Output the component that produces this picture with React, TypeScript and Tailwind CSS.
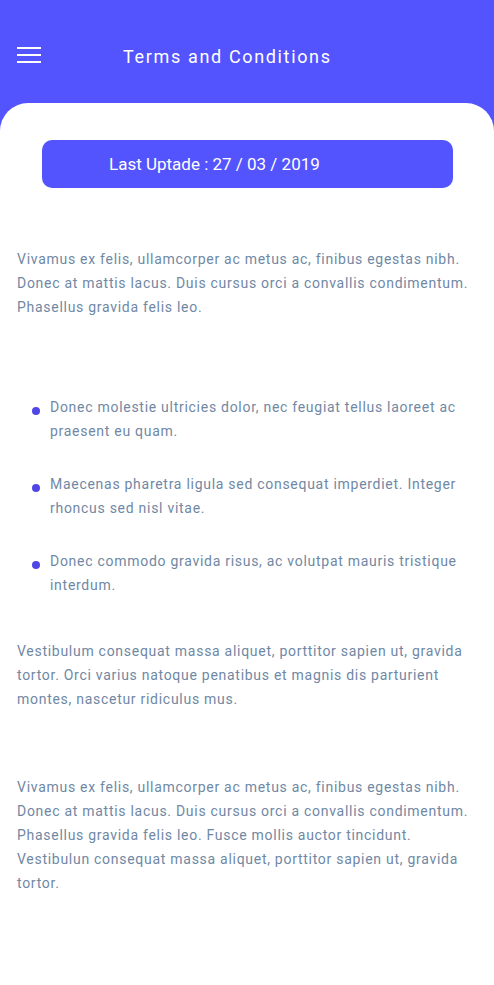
import React from "react";

const bullets = [
  "Donec molestie ultricies dolor, nec feugiat tellus laoreet ac praesent eu quam.",
  "Maecenas pharetra ligula sed consequat imperdiet. Integer rhoncus sed nisl vitae.",
  "Donec commodo gravida risus, ac volutpat mauris tristique interdum.",
];

export default function App() {
  return (
    <div className="min-h-[985px] bg-[#5454fe] font-['Roboto',sans-serif]">
      {/* header */}
      <header className="h-[103px] flex items-start pt-[46px] px-[17px]">
        <button className="w-6 h-[18px] flex flex-col justify-between py-px">
          <span className="block h-[2px] w-full bg-white" />
          <span className="block h-[2px] w-full bg-white" />
          <span className="block h-[2px] w-full bg-white" />
        </button>
        <h1 className="ml-[82px] -mt-[1px] text-[18px] leading-6 tracking-[1.65px] text-white">
          Terms and Conditions
        </h1>
      </header>

      {/* card */}
      <main className="bg-white rounded-t-[28px] min-h-[882px] pt-[37px] pb-16 text-[14px] leading-6 tracking-[0.72px] text-[#7088a4]">
        <div className="ml-[42px] mr-[41px] h-12 rounded-[10px] bg-[#5454fe] flex items-center pl-[67px] text-white text-[17px] tracking-normal">
          Last Uptade : 27 / 03 / 2019
        </div>

        <p className="mt-[59px] px-[17px]">
          Vivamus ex felis, ullamcorper ac metus ac, finibus egestas nibh. Donec at mattis lacus. Duis cursus orci a convallis condimentum. Phasellus gravida felis leo.
        </p>

        <ul className="mt-[76px] pl-8 pr-[17px] flex flex-col gap-[29px]">
          {bullets.map((b) => (
            <li key={b} className="flex items-start">
              <span className="mt-[12px] mr-[10px] w-2 h-2 shrink-0 rounded-full bg-[#4f46e5]" />
              <span>{b}</span>
            </li>
          ))}
        </ul>

        <p className="mt-[42px] px-[17px]">
          Vestibulum consequat massa aliquet, porttitor sapien ut, gravida tortor. Orci varius natoque penatibus et magnis dis parturient montes, nascetur ridiculus mus.
        </p>

        <p className="mt-[64px] px-[17px]">
          Vivamus ex felis, ullamcorper ac metus ac, finibus egestas nibh. Donec at mattis lacus. Duis cursus orci a convallis condimentum. Phasellus gravida felis leo. Fusce mollis auctor tincidunt. Vestibulun consequat massa aliquet, porttitor sapien ut, gravida tortor.
        </p>
      </main>
    </div>
  );
}
